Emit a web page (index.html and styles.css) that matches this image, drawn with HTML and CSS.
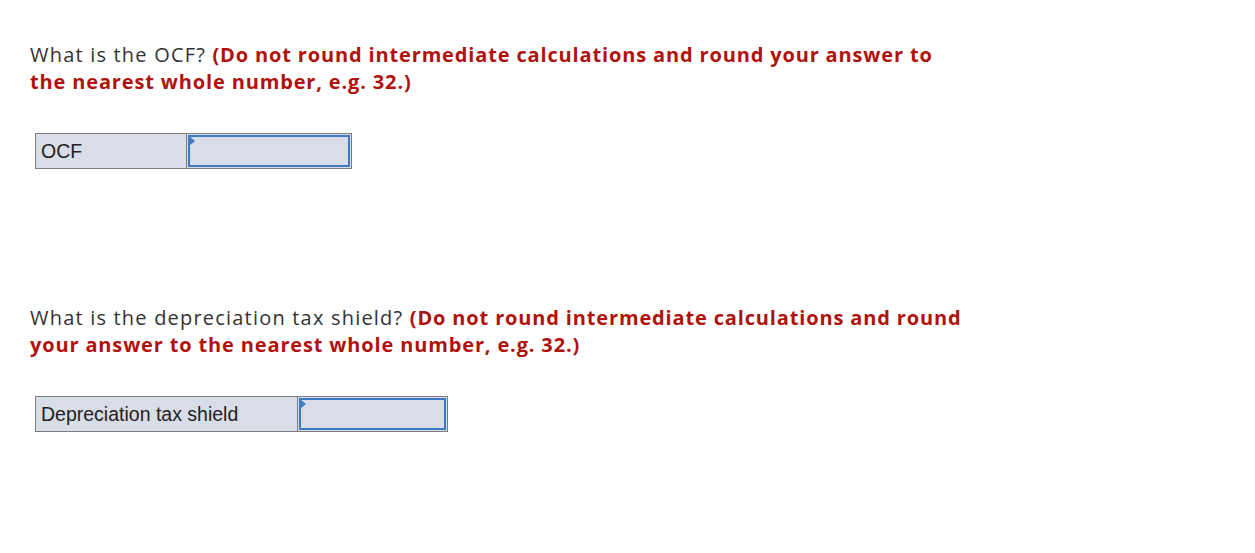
FILE: index.html
```html
<!DOCTYPE html>
<html>
<head>
<meta charset="utf-8">
<link rel="stylesheet" href="styles.css">
</head>
<body>
<div class="page">
  <section class="question q1">
    <p class="prompt">What is the OCF? <strong class="hint">(Do not round intermediate calculations and round your answer to the nearest whole number, e.g. 32.)</strong></p>
    <table class="answer-table ocf">
      <tr>
        <td class="label">OCF</td>
        <td class="input-cell"><div class="input-box"><span class="marker"></span></div></td>
      </tr>
    </table>
  </section>
  <section class="question q2">
    <p class="prompt">What is the depreciation tax shield? <strong class="hint">(Do not round intermediate calculations and round your answer to the nearest whole number, e.g. 32.)</strong></p>
    <table class="answer-table dts">
      <tr>
        <td class="label">Depreciation tax shield</td>
        <td class="input-cell"><div class="input-box"><span class="marker"></span></div></td>
      </tr>
    </table>
  </section>
</div>
</body>
</html>
```
FILE: styles.css
```css
html, body {
  margin: 0;
  padding: 0;
  background: #fff;
}
.page {
  padding: 41px 0 0 30px;
}
.prompt {
  margin: 0;
  font-family: "Open Sans", Lato, sans-serif;
  font-size: 20px;
  line-height: 27px;
  letter-spacing: 1.2px;
  color: #333;
  width: 936px;
}
.hint {
  color: #b0120e;
  font-weight: bold;
  letter-spacing: 0.85px;
}
.q2 {
  margin-top: 135px;
}
.answer-table {
  margin: 38px 0 0 5px;
  border-collapse: collapse;
  background: #d9dde7;
}
.answer-table td {
  border: 1px solid #7d7d7d;
  padding: 0;
  height: 34px;
}
.label {
  font-family: "Liberation Sans", Arial, sans-serif;
  font-size: 19.5px;
  color: #222;
  padding: 0 0 0 5px !important;
  vertical-align: middle;
}
.ocf .label { width: 145px; }
.ocf .input-cell { width: 164px; }
.dts .label { width: 256px; }
.dts .input-cell { width: 149px; }
.input-cell {
  position: relative;
}
.input-box {
  position: absolute;
  inset: 1px;
  border: 2px solid #3f7bc4;
}
.marker {
  position: absolute;
  left: -1px;
  top: -1px;
  width: 0;
  height: 0;
  border-top: 5px solid transparent;
  border-bottom: 5px solid transparent;
  border-left: 6px solid #3f7bc4;
}
```
